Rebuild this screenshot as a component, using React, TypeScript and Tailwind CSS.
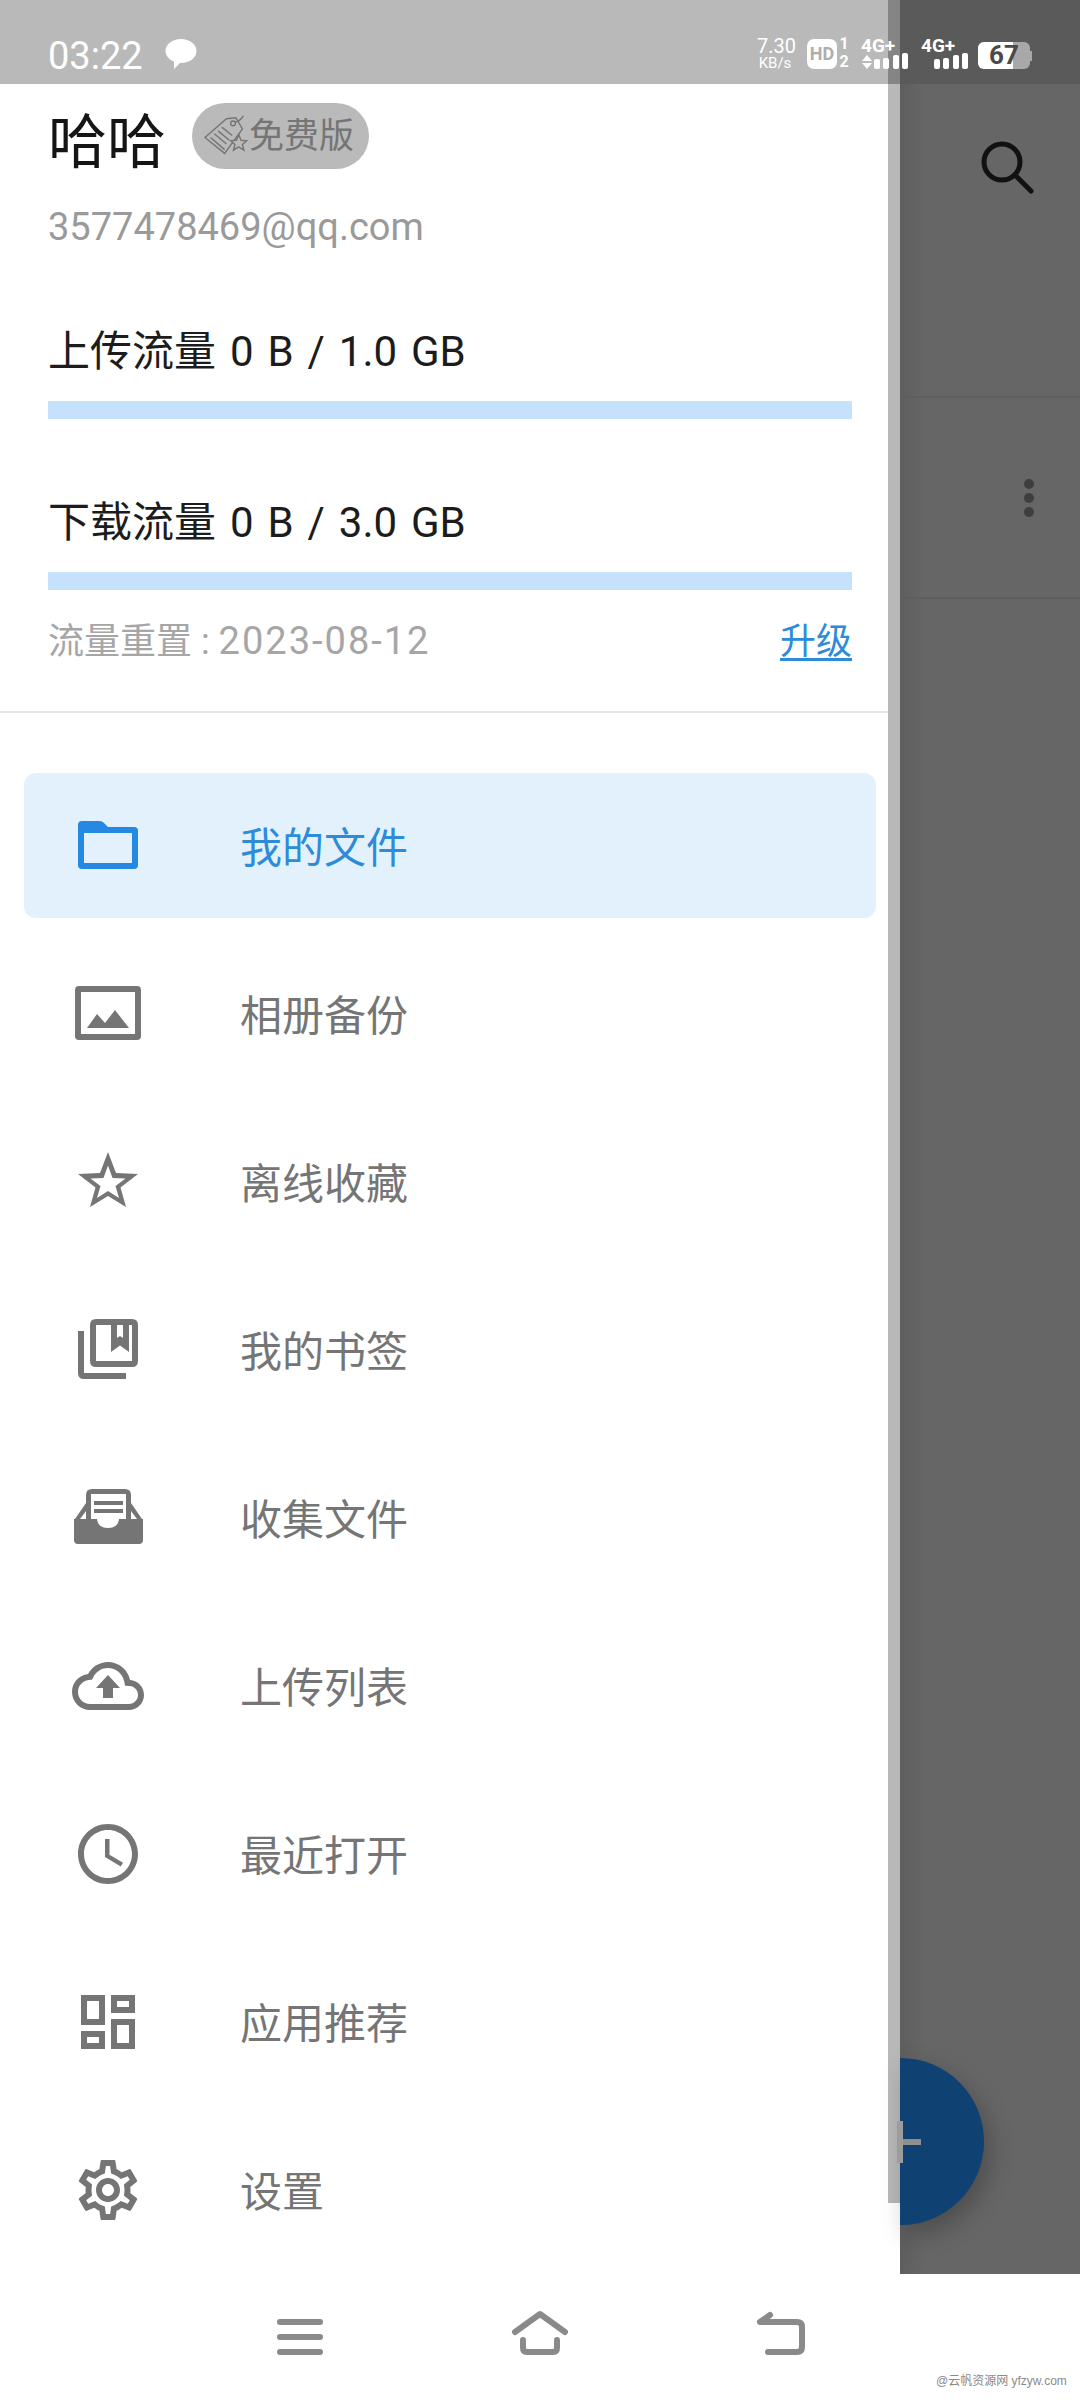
const font = { fontFamily: '"Roboto", "Noto Sans CJK SC", sans-serif' };

const menuItems = [
  { label: "我的文件", icon: "folder" },
  { label: "相册备份", icon: "photo" },
  { label: "离线收藏", icon: "star" },
  { label: "我的书签", icon: "bookmarks" },
  { label: "收集文件", icon: "inbox" },
  { label: "上传列表", icon: "upload" },
  { label: "最近打开", icon: "clock" },
  { label: "应用推荐", icon: "apps" },
  { label: "设置", icon: "gear" },
];

const MenuIcon = ({ name }: { name: string }) => {
  const common = { className: "w-[72px] h-[72px] shrink-0", viewBox: "0 0 72 72", fill: "#757575" };
  switch (name) {
    case "folder":
      return (
        <svg {...common} fill="#2589e4">
          <path fillRule="evenodd" d="M10 11h18q2 0 3.500 1.500L36 17h26q4 0 4 4v34q0 4-4 4H10q-4 0-4-4V15q0-4 4-4zm2 12v30h48V23z" />
        </svg>
      );
    case "photo":
      return (
        <svg {...common}>
          <path fillRule="evenodd" d="M7 8h58q4 0 4 4v46q0 4-4 4H7q-4 0-4-4V12q0-4 4-4zm2 6v42h54V14z" />
          <path d="M15 50l10-14 8 9 10-13 14 18z" />
        </svg>
      );
    case "star":
      return (
        <svg {...common}>
          <path
            fillRule="evenodd"
            d="M36 6l8 21 22 1-17.500 13.500L54 61 36 50 18 61l5.500-19.500L6 28l22-1zM36 19.500L31.500 32l-13 .5 10 7.500L25 52l11-7 11 7-3.500-12 10-7.500-13-.5z"
          />
        </svg>
      );
    case "bookmarks":
      return (
        <svg {...common}>
          <path fillRule="evenodd" d="M24 5h36q6 0 6 6v36q0 6-6 6H24q-6 0-6-6V11q0-6 6-6zm0 6v36h36V11z" />
          <path d="M39 11v27l9-6.500 9 6.500V11h-6v13l-3-2-3 2V11z" />
          <path d="M6 17h6v42h42v6H12q-6 0-6-6z" />
        </svg>
      );
    case "inbox":
      return (
        <svg {...common}>
          <path d="M20 7h33q6 0 6 6v24h-5V12H19v25h-5V13q0-6 6-6z" />
          <path d="M22 19h29v4H22zM22 27h29v4H22zM14 21L3 37h5l6-8zM59 21l11 16h-5l-6-8z" />
          <path d="M2 37h23q1 9 11 9t11-9h24v21q0 4-4 4H6q-4 0-4-4z" />
        </svg>
      );
    case "upload":
      return (
        <svg {...common}>
          <path
            transform="scale(3)"
            d="M19.350 10.040C18.670 6.590 15.640 4 12 4 9.110 4 6.600 5.640 5.350 8.040 2.340 8.360 0 10.910 0 14c0 3.310 2.690 6 6 6h13c2.760 0 5-2.240 5-5 0-2.640-2.050-4.780-4.650-4.960zM19 18H6c-2.210 0-4-1.790-4-4 0-2.050 1.530-3.760 3.560-3.970l1.070-.11.500-.95C8.080 7.140 9.940 6 12 6c2.620 0 4.880 1.860 5.390 4.430l.3 1.500 1.530.11c1.560.1 2.780 1.410 2.780 2.960 0 1.650-1.350 3-3 3z"
          />
          <path d="M36 25l12 13h-7v10h-10V38h-7z" />
        </svg>
      );
    case "clock":
      return (
        <svg {...common} viewBox="0 0 24 24">
          <path d="M11.990 2C6.470 2 2 6.480 2 12s4.470 10 9.990 10C17.520 22 22 17.520 22 12S17.520 2 11.990 2zM12 20c-4.420 0-8-3.580-8-8s3.580-8 8-8 8 3.580 8 8-3.580 8-8 8z" />
          <path d="M12.500 7H11v6l5.250 3.150.75-1.230-4.500-2.670z" />
        </svg>
      );
    case "apps":
      return (
        <svg {...common} viewBox="0 0 24 24">
          <path d="M19 5v2h-4V5h4M9 5v6H5V5h4m10 8v6h-4v-6h4M9 17v2H5v-2h4M21 3h-8v6h8V3zM11 3H3v10h8V3zm10 8h-8v10h8V11zm-10 4H3v6h8v-6z" />
        </svg>
      );
    default:
      return (
        <svg {...common} viewBox="0 0 24 24">
          <path d="M19.430 12.980c.04-.32.07-.64.07-.98 0-.34-.03-.66-.07-.98l2.110-1.650c.19-.15.24-.42.12-.64l-2-3.460c-.09-.16-.26-.25-.44-.25-.06 0-.12.01-.17.03l-2.490 1c-.52-.4-1.080-.73-1.690-.98l-.38-2.650C14.460 2.180 14.250 2 14 2h-4c-.25 0-.46.18-.49.42l-.38 2.650c-.61.25-1.170.59-1.690.98l-2.490-1c-.06-.02-.12-.03-.18-.03-.17 0-.34.09-.43.25l-2 3.460c-.13.22-.07.49.12.64l2.110 1.650c-.04.32-.07.65-.07.98 0 .33.03.66.07.98l-2.110 1.650c-.19.15-.24.42-.12.64l2 3.460c.09.16.26.25.44.25.06 0 .12-.01.17-.03l2.490-1c.52.4 1.080.73 1.690.98l.38 2.650c.03.24.24.42.49.42h4c.25 0 .46-.18.49-.42l.38-2.650c.61-.25 1.170-.59 1.690-.98l2.490 1c.06.02.12.03.18.03.17 0 .34-.09.43-.25l2-3.460c.12-.22.07-.49-.12-.64l-2.110-1.650zm-1.980-1.710c.04.31.05.52.05.73 0 .21-.02.43-.05.73l-.14 1.130.89.7 1.080.84-.7 1.210-1.270-.51-1.040-.42-.9.68c-.43.32-.84.56-1.250.73l-1.060.43-.16 1.130-.2 1.350h-1.400l-.19-1.350-.16-1.130-1.060-.43c-.43-.18-.83-.41-1.230-.71l-.91-.7-1.060.43-1.270.51-.7-1.210 1.080-.84.89-.7-.14-1.130c-.03-.31-.05-.54-.05-.74s.02-.43.05-.73l.14-1.130-.89-.7-1.080-.84.7-1.210 1.270.51 1.040.42.9-.68c.43-.32.84-.56 1.250-.73l1.060-.43.16-1.130.2-1.350h1.390l.19 1.350.16 1.130 1.060.43c.43.18.83.41 1.230.71l.91.7 1.060-.43 1.270-.51.7 1.210-1.070.85-.89.7.14 1.130zM12 8c-2.210 0-4 1.790-4 4s1.790 4 4 4 4-1.790 4-4-1.790-4-4-4zm0 6c-1.100 0-2-.9-2-2s.9-2 2-2 2 .9 2 2-.9 2-2 2z" />
        </svg>
      );
  }
};

const Quota = ({ label }: { label: string }) => (
  <div>
    <p className="text-[42px] leading-[56px] text-[#1c1c1c] [word-spacing:3.5px]">{label}</p>
    <div className="mt-[21px] h-[18px] bg-[#c6e1fb]" />
  </div>
);

const SignalIcon = ({ className, arrows }: { className: string; arrows?: boolean }) => (
  <div className={`relative w-[47px] h-[30px] ${className}`}>
    <span className="absolute left-0 top-0 text-[19px] leading-[14px] font-bold">4G+</span>
    <div className="absolute right-0 bottom-0 flex items-end gap-[3.5px]">
      {[10, 11, 14, 16].map((h) => (
        <div key={h} className="w-[6px] rounded-[2px] bg-white" style={{ height: h }} />
      ))}
    </div>
    {arrows && (
      <svg className="absolute left-[1px] bottom-0 w-[10px] h-[14px]" viewBox="0 0 10 14" fill="#fff">
        <path d="M5 0l5 6H0zM0 8h10l-5 6z" />
      </svg>
    )}
  </div>
);

const StatusBar = () => (
  <div className="absolute top-0 left-0 w-full h-[84px] flex text-white">
    <div className="w-[888px] bg-[#b9b9b9] flex items-start pl-[48px] pt-[34px]">
      <span className="text-[38px] leading-[44px]">03:22</span>
      <svg className="ml-[22px] mt-[5px] w-[32px] h-[30px]" viewBox="0 0 32 30" fill="#fff">
        <path d="M16 0c8.500 0 15.500 5 15.500 12S24.500 24 16 24h-1l-6 6v-7.500C4 20.500.5 16.500.5 12 .5 5 7.500 0 16 0z" />
      </svg>
    </div>
    <div className="w-[12px] bg-[#858585]" />
    <div className="flex-1 bg-[#5a5a5a]" />
  </div>
);

const StatusIcons = () => (
  <div className="absolute top-[39px] left-[757px] h-[30px] flex items-start text-white">
    <div className="w-[36px] text-center">
      <p className="text-[20px] leading-[14px]">7.30</p>
      <p className="mt-[4px] text-[15px] leading-[12px]">KB/s</p>
    </div>
    <div className="ml-[14px] w-[30px] h-[30px] rounded-[7px] bg-white text-[#adadad] text-[18px] leading-[30px] font-bold text-center">HD</div>
    <div className="ml-[2px] -mt-[4px] w-[10px] text-[16px] leading-[18px] font-bold text-center">
      <p>1</p>
      <p>2</p>
    </div>
    <SignalIcon className="ml-[12px]" arrows />
    <SignalIcon className="ml-[13px]" />
    <div className="ml-[10px] mt-[3px] flex items-center">
      <div className="relative w-[52px] h-[27px] rounded-[6px] bg-[#a8a8a8]">
        <div className="w-[35px] h-full rounded-l-[6px] bg-white" />
        <span className="absolute inset-0 text-center text-[#4a4a4a] text-[26px] leading-[27px] font-bold">67</span>
      </div>
      <div className="w-[2px] h-[10px] bg-[#a8a8a8]" />
    </div>
  </div>
);

export default function App() {
  return (
    <div className="relative w-[1080px] h-[2400px] overflow-hidden bg-white" style={font}>
      <div className="flex h-[2274px]">
        {/* Drawer */}
        <div className="w-[900px] pt-[84px] bg-white">
          <div className="px-[48px]">
            <div className="flex items-start mt-[19px]">
              <span className="mt-[7px] text-[59px] leading-[66px] text-[#151515]">哈哈</span>
              <div className="ml-[26px] w-[177px] h-[66px] rounded-full bg-[#bababa] flex items-center pl-[12px] text-[#757575] text-[35px]">
                <svg className="w-[45px] h-[45px] shrink-0" viewBox="0 0 48 48" fill="none" stroke="#757575" strokeWidth="1.500">
                  <path d="M1 25 24 5l10-1 7 12-19 26z" />
                  <path d="M7 25l15 13M11 21l13 11M15 18l12 10M19 14l11 9" />
                  <circle cx="31" cy="10" r="2.500" />
                  <path d="M33 9q6-2 9-7" />
                  <path d="M37 22l2.500 6 6 .5-4.500 4 1.500 6-5.500-3.500-5.500 3.500 1.500-6-4.500-4 6-.5z" fill="#bababa" />
                </svg>
                <span className="mt-[3px] whitespace-nowrap">免费版</span>
              </div>
            </div>
            <p className="mt-[27px] text-[38px] leading-[48px] text-[#9a9a9a]">3577478469@qq.com</p>
            <div className="mt-[73px] flex flex-col gap-[76px]">
              <Quota label="上传流量 0 B / 1.0 GB" />
              <Quota label="下载流量 0 B / 3.0 GB" />
            </div>
            <div className="mt-[30px] flex justify-between items-center text-[36px] leading-[42px]">
              <span className="text-[#a6a6a6]">
                流量重置 : <span className="text-[38px] tracking-[2px]">2023-08-12</span>
              </span>
              <span className="text-[#2d8bd8] underline underline-offset-4">升级</span>
            </div>
          </div>
          <div className="mt-[48px] h-[2px] bg-[#e6e6e6]" />
          <nav className="mt-[60px] px-[24px] flex flex-col gap-[23px]">
            {menuItems.map((item, i) => (
              <div
                key={item.label}
                className={`h-[145px] flex items-center pl-[48px] rounded-[12px] text-[42px] ${
                  i === 0 ? "bg-[#e3f1fd] text-[#2d8bd8]" : "text-[#757575]"
                }`}
              >
                <MenuIcon name={item.icon} />
                <span className="ml-[96px] pt-[5px]">{item.label}</span>
              </div>
            ))}
          </nav>
        </div>

        {/* Dimmed page behind the drawer */}
        <div className="flex-1 pt-[84px] bg-gradient-to-r from-[#5e5e5e] to-[#666666] to-[24px]">
          <div className="h-[314px] border-b-2 border-[#5e5e5e]" />
          <div className="h-[201px] border-b-2 border-[#5e5e5e]" />
        </div>
      </div>

      {/* Overlays */}
      <div className="absolute left-[888px] top-0 w-[12px] h-[2203px] bg-[#b8b8b8]" />
      <StatusBar />
      <StatusIcons />
      <svg className="absolute left-[980px] top-[140px] w-[54px] h-[54px]" viewBox="0 0 54 54" fill="none" stroke="#111" strokeWidth="5" strokeLinecap="round">
        <circle cx="22" cy="22" r="18" />
        <path d="M35 35l16 16" />
      </svg>
      <div className="absolute left-[1024px] top-[479px] flex flex-col gap-[4px]">
        <div className="w-[10px] h-[10px] rounded-full bg-[#3e3e3e]" />
        <div className="w-[10px] h-[10px] rounded-full bg-[#3e3e3e]" />
        <div className="w-[10px] h-[10px] rounded-full bg-[#3e3e3e]" />
      </div>
      <div className="absolute left-[900px] top-[2058px] w-[84px] h-[167px] rounded-r-full bg-[#0f4173] shadow-[6px_10px_24px_rgba(0,0,0,0.25)]" />
      <div className="absolute left-[900px] top-[2139px] w-[21px] h-[6px] bg-[#8f8f8f]" />
      <div className="absolute left-[897px] top-[2121px] w-[6px] h-[42px] bg-[#9c9c9c]" />

      {/* Bottom nav */}
      <div className="absolute left-0 top-[2274px] w-full h-[126px] bg-white">
        <svg className="absolute left-[277px] top-[42px] w-[46px] h-[40px]" viewBox="0 0 46 40" fill="none" stroke="#8a8a8a" strokeWidth="6" strokeLinecap="round">
          <path d="M3 6h40M3 21h40M3 36h40" />
        </svg>
        <svg className="absolute left-[508px] top-[34px] w-[64px] h-[50px]" viewBox="0 0 64 50" fill="none" stroke="#8a8a8a" strokeWidth="6" strokeLinecap="round" strokeLinejoin="round">
          <path d="M7 24 32 6l25 18" />
          <path d="M15 32v8q0 4 4 4h26q4 0 4-4v-8" />
        </svg>
        <svg className="absolute left-[750px] top-[32px] w-[60px] h-[54px]" viewBox="0 0 60 54" fill="none" stroke="#8a8a8a" strokeWidth="6" strokeLinecap="round" strokeLinejoin="round">
          <path d="M20 9l-10 7h37q5 0 5 5v20q0 5-5 5H18" />
        </svg>
        <span
          className="absolute left-[936px] top-[99px] text-[12px] leading-[16px] text-[#8a8a8a] whitespace-nowrap"
          style={{ fontFamily: '"Liberation Sans", "Noto Sans CJK SC", sans-serif' }}
        >
          @云帆资源网 yfzyw.com
        </span>
      </div>
    </div>
  );
}
